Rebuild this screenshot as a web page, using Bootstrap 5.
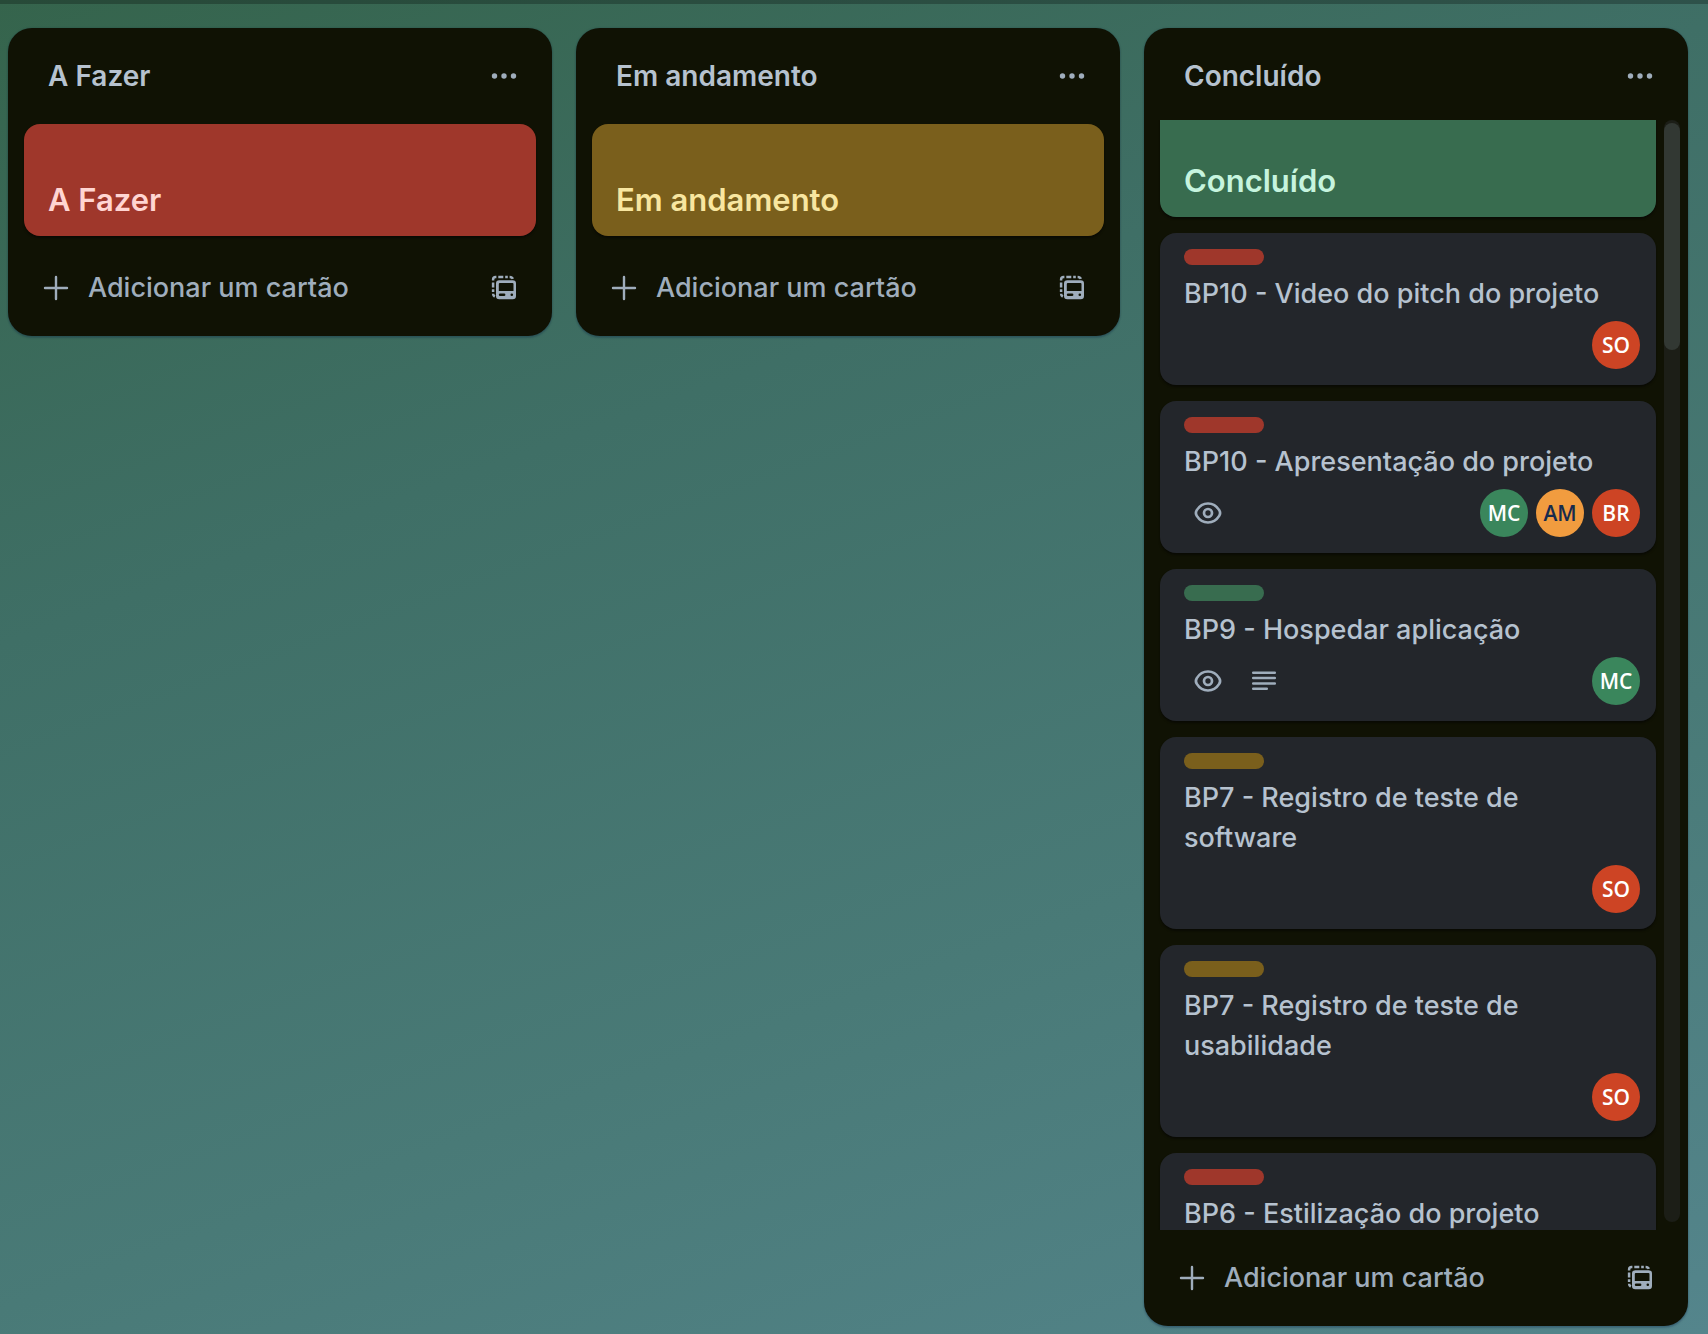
<!DOCTYPE html>
<html lang="pt-BR" data-bs-theme="dark">
<head>
<meta charset="utf-8">
<meta name="viewport" content="width=device-width, initial-scale=1">
<title>Quadro do projeto</title>
<link href="https://cdn.jsdelivr.net/npm/bootstrap@5.3.0/dist/css/bootstrap.min.css" rel="stylesheet">
<style>
  body { font-family: Inter, "Noto Sans", sans-serif; font-size: 27px; line-height: 40px; font-weight: 450; color: #b6c2cf;
    background: linear-gradient(160deg, #35644c, #3f6f66 33%, #497a77 67%, #54858c); }
  svg { display: block; }
  .top-strip { height: 4px; background: rgba(0,0,0,.26); }
  .board { padding: 24px 20px 8px 8px; gap: 24px; min-height: 0; }
  .lane { flex: 1 1 0; min-width: 0; max-height: 100%; background: #101204; border-radius: 24px;
    box-shadow: 0 2px 2px rgba(9,30,66,.25), 0 0 2px rgba(9,30,66,.31); }
  .lane-head { padding: 16px 16px 12px 40px; }
  .lane-head h2 { font-size: 28px; line-height: 40px; font-weight: 600; color: #b6c2cf; }
  .lane-foot { padding: 16px; }
  .btn-lane { --bs-btn-color: #9fadbc; --bs-btn-hover-color: #b6c2cf; --bs-btn-hover-bg: #22272b;
    --bs-btn-font-size: 27px; --bs-btn-line-height: 40px; --bs-btn-font-weight: 550;
    --bs-btn-border-radius: 16px; height: 64px; border: 0; }
  .btn-tool { width: 64px; }
  .btn-tool svg { margin: 0 auto; }
  .task-list { padding: 4px 16px; gap: 16px; }
  .task-scroll { overflow-y: auto; scrollbar-width: none; padding-right: 8px; min-height: 0; }
  .task-scroll::-webkit-scrollbar { display: none; }
  .task { border-radius: 16px; padding: 16px 24px; flex: none; box-shadow: 0 2px 2px rgba(3,4,4,.5); }
  .task-body { background: #23262b; }
  .task-cover { height: 112px; font-size: 31px; font-weight: 600; }
  .tag { width: 80px; height: 16px; border-radius: 8px; margin-bottom: 9px; }
  .tone-red { background: #9f372b; color: #ffd5d2; }
  .tone-yellow { background: #7a5f1c; color: #f8e6a0; }
  .tone-green { background: #386c4f; color: #c6f4de; }
  .task-meta { height: 48px; margin: 7px -8px 0 0; }
  .task-icons { padding-left: 8px; gap: 24px; color: #9fadbc; }
  .member { width: 48px; height: 48px; font: 650 21px/48px "Open Sans", "Noto Sans", sans-serif; color: #fff; }
  .member-red { background: #cd4424; }
  .member-green { background: #3a865c; }
  .member-orange { background: #f19c3f; color: #172b4d; }
  .rail { width: 16px; margin: 0 8px 8px 0; border-radius: 8px; background: #1c1e17; padding-top: 3px; }
  .rail-thumb { height: 227px; border-radius: 8px; background: #323833; }
</style>
<script src="https://cdn.jsdelivr.net/npm/bootstrap@5.3.0/dist/js/bootstrap.bundle.min.js"></script>
</head>
<body class="vh-100 d-flex flex-column overflow-hidden">
<svg class="d-none" aria-hidden="true">
  <symbol id="i-dots" viewBox="0 0 32 32"><g fill="currentColor"><circle cx="6.5" cy="16" r="2.7"/><circle cx="16" cy="16" r="2.7"/><circle cx="25.5" cy="16" r="2.7"/></g></symbol>
  <symbol id="i-plus" viewBox="0 0 32 32"><path d="M16 5v22M5 16h22" fill="none" stroke="currentColor" stroke-width="2.4" stroke-linecap="round"/></symbol>
  <symbol id="i-template" viewBox="0 0 32 32">
    <path fill="currentColor" fill-rule="evenodd" d="M11.3 8.3h13.4a3.3 3.3 0 0 1 3.3 3.3v12.4a3.3 3.3 0 0 1-3.3 3.3h-13.4a3.3 3.3 0 0 1-3.3-3.3v-12.4a3.3 3.3 0 0 1 3.3-3.3zM11.800 10.900a1 1 0 0 0-1 1v7h14.700v-7a1 1 0 0 0-1-1zM12.100 21.400a1.300 1.300 0 0 0 0 2.600h4a1.300 1.300 0 0 0 0-2.600zM23.800 21.400a1.300 1.300 0 1 0 0 2.600a1.300 1.300 0 0 0 0-2.600z"/>
    <path fill="none" stroke="currentColor" stroke-width="2.5" d="M5.100 8.600V7.600q0-2.500 2.500-2.500h.8M10.300 5.100h5M17.200 5.100h2.600M21.600 5.100q2.500 0 3.200 1.800M5.100 10.600v4.800M5.100 17.300v2.600M5.100 21.700q0 2 1.700 3"/>
  </symbol>
  <symbol id="i-eye" viewBox="0 0 32 32"><g fill="none" stroke="currentColor" stroke-width="2.7"><path d="M16 6.500c4.800 0 8.700 2.600 11.200 6.600q1.800 2.900 0 5.800c-2.500 4-6.400 6.600-11.200 6.600s-8.700-2.600-11.200-6.600q-1.800-2.900 0-5.800c2.500-4 6.400-6.600 11.200-6.600z"/><circle cx="16" cy="16" r="4"/></g></symbol>
  <symbol id="i-text" viewBox="0 0 32 32"><path d="M5.200 7.800h21.600M5.200 13.100h21.600M5.200 18.400h21.600M5.200 23.700h13.600" fill="none" stroke="currentColor" stroke-width="2.500" stroke-linecap="round"/></symbol>
</svg>

<div class="top-strip flex-shrink-0"></div>
<main class="board d-flex align-items-start flex-grow-1">

  <section class="lane d-flex flex-column">
    <header class="lane-head d-flex align-items-center justify-content-between">
      <h2 class="m-0">A Fazer</h2>
      <button type="button" class="btn btn-lane btn-tool p-0" aria-label="Ações da lista"><svg width="32" height="32"><use href="#i-dots"/></svg></button>
    </header>
    <div class="task-list d-flex flex-column">
      <article class="task task-cover tone-red d-flex align-items-end">A Fazer</article>
    </div>
    <footer class="lane-foot d-flex justify-content-between">
      <button type="button" class="btn btn-lane d-flex align-items-center gap-3 px-3 py-0"><svg width="32" height="32"><use href="#i-plus"/></svg>Adicionar um cartão</button>
      <button type="button" class="btn btn-lane btn-tool p-0" aria-label="Criar a partir de modelo"><svg width="32" height="32"><use href="#i-template"/></svg></button>
    </footer>
  </section>

  <section class="lane d-flex flex-column">
    <header class="lane-head d-flex align-items-center justify-content-between">
      <h2 class="m-0">Em andamento</h2>
      <button type="button" class="btn btn-lane btn-tool p-0" aria-label="Ações da lista"><svg width="32" height="32"><use href="#i-dots"/></svg></button>
    </header>
    <div class="task-list d-flex flex-column">
      <article class="task task-cover tone-yellow d-flex align-items-end">Em andamento</article>
    </div>
    <footer class="lane-foot d-flex justify-content-between">
      <button type="button" class="btn btn-lane d-flex align-items-center gap-3 px-3 py-0"><svg width="32" height="32"><use href="#i-plus"/></svg>Adicionar um cartão</button>
      <button type="button" class="btn btn-lane btn-tool p-0" aria-label="Criar a partir de modelo"><svg width="32" height="32"><use href="#i-template"/></svg></button>
    </footer>
  </section>

  <section class="lane d-flex flex-column">
    <header class="lane-head d-flex align-items-center justify-content-between">
      <h2 class="m-0">Concluído</h2>
      <button type="button" class="btn btn-lane btn-tool p-0" aria-label="Ações da lista"><svg width="32" height="32"><use href="#i-dots"/></svg></button>
    </header>
    <div class="d-flex flex-grow-1 overflow-hidden">
      <div class="task-list task-scroll d-flex flex-column flex-grow-1" id="done-list">
        <article class="task task-cover tone-green d-flex align-items-end">Concluído</article>
        <article class="task task-body">
          <div class="tag tone-red"></div>
          <div>BP10 - Video do pitch do projeto</div>
          <div class="task-meta d-flex align-items-center justify-content-end">
            <span class="member member-red rounded-circle text-center">SO</span>
          </div>
        </article>
        <article class="task task-body">
          <div class="tag tone-red"></div>
          <div>BP10 - Apresentação do projeto</div>
          <div class="task-meta d-flex align-items-center justify-content-between">
            <div class="task-icons d-flex"><svg width="32" height="32"><use href="#i-eye"/></svg></div>
            <div class="d-flex gap-2">
              <span class="member member-green rounded-circle text-center">MC</span>
              <span class="member member-orange rounded-circle text-center">AM</span>
              <span class="member member-red rounded-circle text-center">BR</span>
            </div>
          </div>
        </article>
        <article class="task task-body">
          <div class="tag tone-green"></div>
          <div>BP9 - Hospedar aplicação</div>
          <div class="task-meta d-flex align-items-center justify-content-between">
            <div class="task-icons d-flex"><svg width="32" height="32"><use href="#i-eye"/></svg><svg width="32" height="32"><use href="#i-text"/></svg></div>
            <span class="member member-green rounded-circle text-center">MC</span>
          </div>
        </article>
        <article class="task task-body">
          <div class="tag tone-yellow"></div>
          <div>BP7 - Registro de teste de software</div>
          <div class="task-meta d-flex align-items-center justify-content-end">
            <span class="member member-red rounded-circle text-center">SO</span>
          </div>
        </article>
        <article class="task task-body">
          <div class="tag tone-yellow"></div>
          <div>BP7 - Registro de teste de usabilidade</div>
          <div class="task-meta d-flex align-items-center justify-content-end">
            <span class="member member-red rounded-circle text-center">SO</span>
          </div>
        </article>
        <article class="task task-body">
          <div class="tag tone-red"></div>
          <div>BP6 - Estilização do projeto</div>
          <div class="task-meta"></div>
        </article>
      </div>
      <div class="rail flex-shrink-0"><div class="rail-thumb"></div></div>
    </div>
    <footer class="lane-foot d-flex justify-content-between">
      <button type="button" class="btn btn-lane d-flex align-items-center gap-3 px-3 py-0"><svg width="32" height="32"><use href="#i-plus"/></svg>Adicionar um cartão</button>
      <button type="button" class="btn btn-lane btn-tool p-0" aria-label="Criar a partir de modelo"><svg width="32" height="32"><use href="#i-template"/></svg></button>
    </footer>
  </section>
</main>
<script>
  // The finished list opens slightly scrolled.
  document.getElementById('done-list').scrollTop = 19;
</script>
</body>
</html>
